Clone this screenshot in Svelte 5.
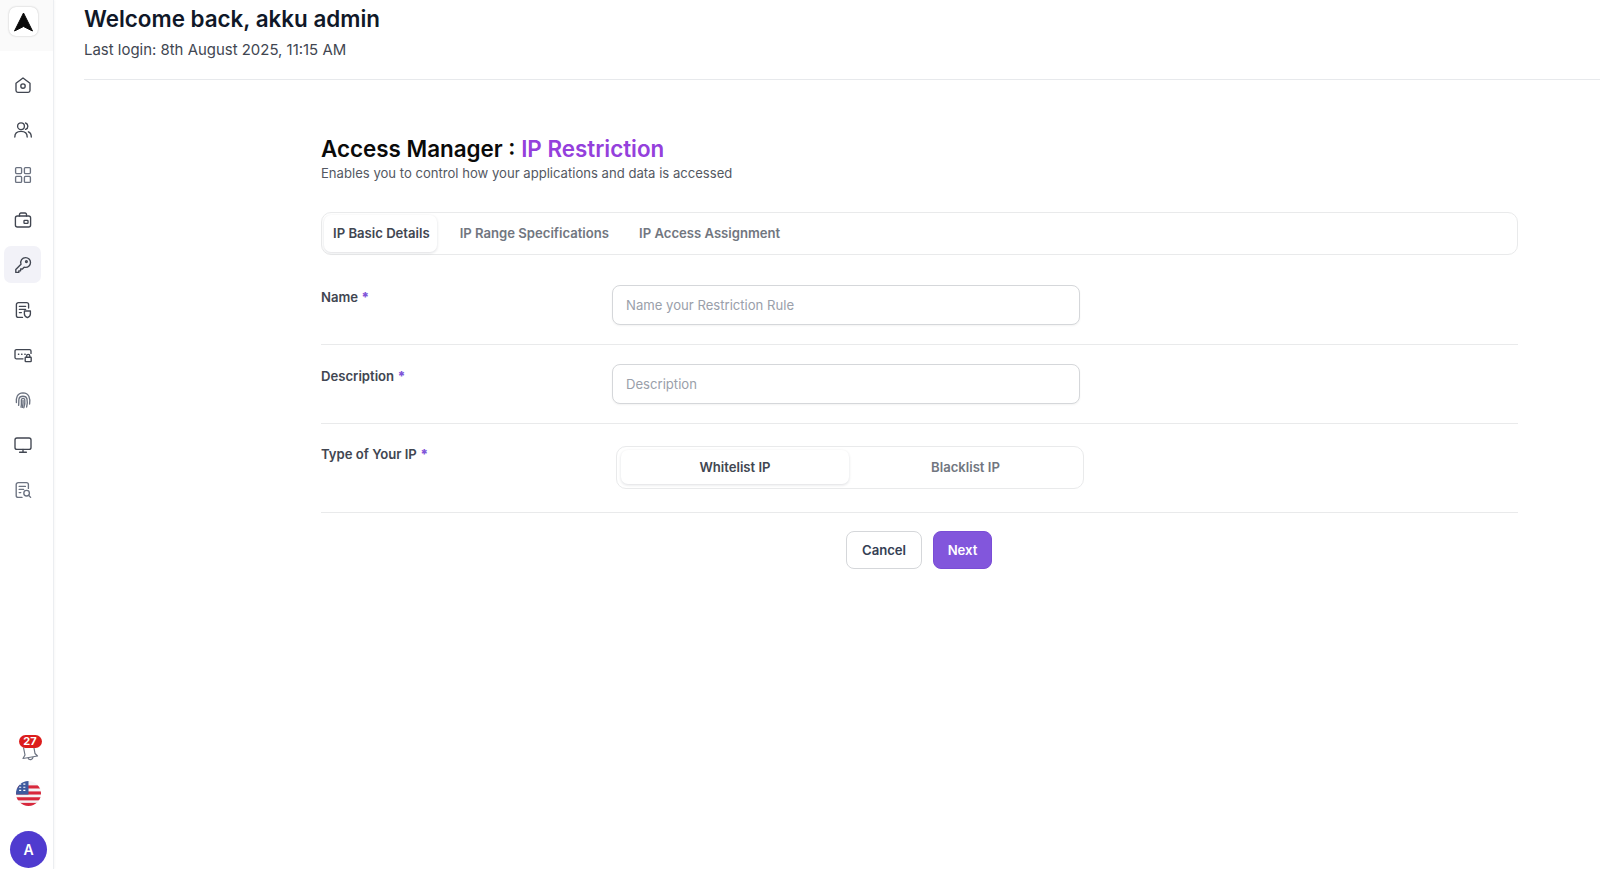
<script>
  const tabs = ['IP Basic Details', 'IP Range Specifications', 'IP Access Assignment'];
</script>

<div class="shell">
  <aside class="side">
    <div class="logo-wrap">
      <div class="logo">
        <svg width="22" height="22" viewBox="0 0 22 22"><path d="M10.5 2 L19.5 20 L10.5 15.5 L1.5 20 Z" fill="#0a0a0a" stroke="#0a0a0a" stroke-width="1" stroke-linejoin="round"/></svg>
      </div>
    </div>
    <nav class="nav">
      <div class="item">
        <svg viewBox="0 0 20 20"><path d="M3 8.2 L10 3 L17 8.2 V15.5 a1.8 1.8 0 0 1 -1.8 1.8 H4.8 A1.8 1.8 0 0 1 3 15.5 Z"/><circle cx="10" cy="11" r="2.2"/></svg>
      </div>
      <div class="item">
        <svg viewBox="0 0 20 20"><circle cx="8" cy="6.2" r="3.4"/><path d="M1.8 17 c0-3.6 2.6-5.6 6.2-5.6 s6.2 2 6.2 5.6"/><path d="M12.6 3 a3.4 3.4 0 0 1 0 6.4"/><path d="M15.4 11.8 c1.8.7 2.9 2.5 2.9 5.2"/></svg>
      </div>
      <div class="item">
        <svg class="light" viewBox="0 0 20 20"><rect x="2.6" y="2.6" width="6" height="6" rx="1"/><rect x="11.4" y="2.6" width="6" height="6" rx="1"/><rect x="2.6" y="11.4" width="6" height="6" rx="1"/><rect x="11.4" y="11.4" width="6" height="6" rx="1"/></svg>
      </div>
      <div class="item">
        <svg viewBox="0 0 20 20"><rect x="2.4" y="6" width="15.2" height="11" rx="2"/><path d="M6.5 6 V4.4 a1.4 1.4 0 0 1 1.4-1.4 h4.2 a1.4 1.4 0 0 1 1.4 1.4 V6"/><rect x="11" y="10.4" width="4" height="3" rx=".6"/></svg>
      </div>
      <div class="item active">
        <svg viewBox="0 0 20 20"><path d="M12.6 2.6 a4.9 4.9 0 0 1 0 9.8 a4.9 4.9 0 0 1 -1.5-.2 L9.4 14 H7.6 V15.8 H5.8 V17.4 H2.8 V14.5 L8 9.2 A4.9 4.9 0 0 1 12.6 2.6 Z"/><circle cx="13.4" cy="6.6" r=".9"/></svg>
      </div>
      <div class="item">
        <svg viewBox="0 0 20 20"><path d="M15.6 8 V4.6 a2 2 0 0 0 -2-2 H5.4 a2 2 0 0 0 -2 2 V15.4 a2 2 0 0 0 2 2 H9.5"/><path d="M6.4 6.4 H12.6 M6.4 9.4 H12.6 M6.4 12.6 H8.4"/><path d="M11.4 11 H17.4 V14 c0 1.8-1.4 3-3 3.6 c-1.6-.6-3-1.8-3-3.6 Z"/></svg>
      </div>
      <div class="item">
        <svg viewBox="0 0 20 20"><path d="M10 13.8 H3.4 A1.4 1.4 0 0 1 2 12.4 V6 A1.4 1.4 0 0 1 3.4 4.6 H16.6 A1.4 1.4 0 0 1 18 6 V8.4"/><path d="M5.4 9.2 h.4 M8.6 9.2 h.4 M11.8 9.2 h.4"/><rect x="12.2" y="12.2" width="6" height="4.4" rx=".6"/><path d="M13.6 12.2 V11 a1.6 1.6 0 0 1 3.2 0 V12.2"/></svg>
      </div>
      <div class="item">
        <svg class="light" viewBox="0 0 20 20"><path d="M3.4 12.5 C3 8 4 3 10 2.8 C16 3 17.4 8 16.6 14"/><path d="M5.6 15.4 C6 12 5.6 10.6 6 8.8 C6.6 5.4 13.2 5.2 14 9 C14.6 12 14.2 15 13.6 17"/><path d="M8 17.2 C8.8 14.4 8.2 11.6 8.4 9.8 C8.8 7.8 11.4 8 11.8 10 C12.2 12.6 11.6 15.4 10.8 17.8"/><path d="M10 10.4 C10.4 13 9.8 15.6 9.4 17.4"/></svg>
      </div>
      <div class="item">
        <svg viewBox="0 0 20 20"><rect x="2" y="3" width="16" height="11.4" rx="2"/><path d="M10 14.4 V17 M6.6 17.2 H13.4"/></svg>
      </div>
      <div class="item">
        <svg class="light" viewBox="0 0 20 20"><path d="M15.4 8.4 V4.6 a2 2 0 0 0 -2-2 H5.2 a2 2 0 0 0 -2 2 V15.4 a2 2 0 0 0 2 2 H9"/><path d="M6.2 6.4 H12.4 M6.2 9.4 H10.6 M6.2 12.6 H7.8"/><circle cx="13.6" cy="13.2" r="2.8"/><path d="M15.6 15.2 L17.6 17.4"/></svg>
      </div>
    </nav>
    <div class="bottom">
      <div class="bell">
        <svg viewBox="0 0 20 20"><path d="M3.5 1.5 L5 9 L3 12.5 L17.5 10 L15 7.5 L14 2"/><path d="M8 12 a2.6 2.6 0 0 0 5-1"/></svg>
        <span class="badge">27</span>
      </div>
      <svg class="flag" viewBox="0 0 24 24">
        <defs><clipPath id="flagclip"><circle cx="12" cy="12" r="12"/></clipPath></defs>
        <g clip-path="url(#flagclip)">
          <rect width="24" height="24" fill="#f4f4f6"/>
          <rect y="4.2" width="24" height="3" fill="#d8283c"/>
          <rect y="10" width="24" height="3" fill="#d8283c"/>
          <rect y="15.6" width="24" height="3" fill="#d8283c"/>
          <rect y="21" width="24" height="3" fill="#d8283c"/>
          <rect width="12" height="13" fill="#3d5a9e"/>
          <path d="M3 3h2M7 3h2M3 6h2M7 6h2M3 9h2M7 9h2" stroke="#fff" stroke-width="1.1"/>
        </g>
      </svg>
      <div class="avatar">A</div>
    </div>
  </aside>

  <main class="main">
    <header class="head">
      <h1>Welcome back, akku admin</h1>
      <p>Last login: 8th August 2025, 11:15 AM</p>
    </header>

    <section class="content">
      <h2>Access Manager : <span>IP Restriction</span></h2>
      <p class="sub">Enables you to control how your applications and data is accessed</p>

      <div class="tabs">
        {#each tabs as t, i}
          <div class="tab" class:on={i === 0}>{t}</div>
        {/each}
      </div>

      <div class="row first">
        <label class="lab" for="n">Name <b>*</b></label>
        <input id="n" placeholder="Name your Restriction Rule" />
      </div>
      <div class="row">
        <label class="lab" for="d">Description <b>*</b></label>
        <input id="d" placeholder="Description" />
      </div>
      <div class="row type">
        <div class="lab">Type of Your IP <b>*</b></div>
        <div class="seg">
          <div class="opt on">Whitelist IP</div>
          <div class="opt">Blacklist IP</div>
        </div>
      </div>

      <div class="actions">
        <button class="cancel">Cancel</button>
        <button class="next">Next</button>
      </div>
    </section>
  </main>
</div>

<style>
  :global(body) {
    margin: 0;
    background: #fff;
    font-family: Inter, "Liberation Sans", sans-serif;
    overflow: hidden;
  }
  .shell {
    display: flex;
    height: 869px;
    overflow: hidden;
  }
  .side {
    width: 53px;
    flex: none;
    border-right: 1px solid #eceef1;
    box-shadow: 1px 0 2px rgba(0, 0, 0, 0.03);
    display: flex;
    flex-direction: column;
  }
  .logo-wrap {
    height: 51px;
    background: #fafafa;
    padding: 7px 0 0 9px;
    box-sizing: border-box;
  }
  .logo {
    width: 29px;
    height: 29px;
    background: #fff;
    border-radius: 7px;
    box-shadow: 0 0 2px rgba(0, 0, 0, 0.25);
    display: flex;
    align-items: center;
    justify-content: center;
  }
  .nav {
    display: flex;
    flex-direction: column;
    gap: 8px;
    padding: 15px 0 0 4px;
  }
  .item {
    width: 37px;
    height: 37px;
    border-radius: 7px;
    display: flex;
    align-items: center;
    justify-content: center;
  }
  .item.active {
    background: #f2f2f8;
  }
  .item svg {
    width: 20px;
    height: 20px;
    fill: none;
    stroke: #414651;
    stroke-width: 1.35;
    stroke-linecap: round;
    stroke-linejoin: round;
  }
  .item svg.light {
    stroke: #6b7280;
  }
  .bottom {
    margin-top: auto;
    display: flex;
    flex-direction: column;
    align-items: center;
    margin-bottom: 1px;
    padding-left: 4px;
  }
  .bell {
    position: relative;
    width: 20px;
    height: 20px;
    margin-left: 2px;
  }
  .bell svg {
    width: 20px;
    height: 20px;
    fill: none;
    stroke: #6b7280;
    stroke-width: 1.2;
    stroke-linejoin: round;
    transform: translate(0, 5px);
  }
  .badge {
    position: absolute;
    left: -1px;
    top: -6px;
    width: 23px;
    height: 13px;
    background: #dc1c1c;
    border-radius: 7px;
    color: #fff;
    font-size: 11px;
    font-weight: 700;
    line-height: 13px;
    text-align: center;
  }
  .flag {
    width: 25px;
    height: 25px;
    margin-top: 20px;
    display: block;
  }
  .avatar {
    width: 37px;
    height: 37px;
    border-radius: 50%;
    background: #4f3bcf;
    color: #fff;
    font-size: 14px;
    font-weight: 600;
    display: flex;
    align-items: center;
    justify-content: center;
    margin-top: 25px;
  }
  .main {
    flex: 1;
    padding-left: 30px;
    min-width: 0;
  }
  .head {
    height: 79px;
    border-bottom: 1px solid #e7e9ec;
    box-sizing: content-box;
  }
  h1 {
    margin: 0;
    padding-top: 5px;
    font-size: 22.4px;
    line-height: 27px;
    font-weight: 600;
    color: #101828;
  }
  .head p {
    margin: 8px 0 0;
    font-size: 14.95px;
    line-height: 20px;
    color: #414651;
  }
  .content {
    margin-left: 237px;
    width: 1197px;
    padding-top: 54px;
  }
  h2 {
    margin: 0;
    font-size: 22.4px;
    line-height: 29px;
    font-weight: 600;
    color: #0a0a0a;
  }
  h2 span {
    color: #9440dc;
  }
  .sub {
    margin: 0;
    font-size: 13.1px;
    line-height: 20px;
    color: #535862;
  }
  .tabs {
    margin-top: 29px;
    height: 43px;
    box-sizing: border-box;
    border: 1px solid #e9eaeb;
    border-radius: 10px;
    padding: 2px;
    display: flex;
    gap: 14px;
  }
  .tab {
    padding: 0 7px 1px 9px;
    display: flex;
    align-items: center;
    font-size: 13.12px;
    font-weight: 600;
    color: #717680;
    border-radius: 7px;
  }
  .tab.on {
    color: #414651;
    background: #fff;
    box-shadow: 0 1px 3px rgba(16, 24, 40, 0.14);
  }
  .row {
    display: flex;
    padding: 19px 0 19px;
    border-bottom: 1px solid #e9eaeb;
    align-items: flex-start;
  }
  .row.first {
    padding-top: 30px;
  }
  .lab {
    width: 291px;
    flex: none;
    font-size: 13.12px;
    line-height: 20px;
    font-weight: 600;
    color: #414651;
    padding-top: 2px;
  }
  .lab b {
    color: #7f56d9;
  }
  input {
    width: 468px;
    height: 40px;
    box-sizing: border-box;
    border: 1px solid #d5d7da;
    border-radius: 8px;
    padding: 0 13px;
    font-family: inherit;
    font-size: 13.12px;
    outline: none;
    background: #fff;
    box-shadow: 0 1px 2px rgba(10, 13, 18, 0.05);
  }
  input::placeholder {
    color: #9aa0aa;
    opacity: 1;
  }
  .row.type {
    padding: 22px 0 23px;
  }
  .row.type .lab {
    padding-top: 0;
    margin-top: -2px;
  }
  .seg {
    margin-left: 4px;
    width: 468px;
    height: 43px;
    box-sizing: border-box;
    border: 1px solid #e9eaeb;
    border-radius: 10px;
    padding: 3px 4px 4px;
    display: flex;
  }
  .opt {
    flex: 1;
    padding-left: 3px;
    display: flex;
    align-items: center;
    justify-content: center;
    font-size: 13.12px;
    font-weight: 600;
    color: #717680;
    border-radius: 7px;
  }
  .opt.on {
    flex: 0 0 228px;
    box-sizing: border-box;
    padding-left: 0;
    color: #414651;
    box-shadow: 0 1px 3px rgba(16, 24, 40, 0.14);
  }
  .actions {
    display: flex;
    justify-content: center;
    gap: 11px;
    padding: 18px 1px 0 0;
  }
  button {
    height: 38px;
    border-radius: 8px;
    font-family: inherit;
    font-size: 13.12px;
    font-weight: 600;
  }
  .cancel {
    width: 76px;
    background: #fff;
    border: 1px solid #d5d7da;
    color: #344054;
  }
  .next {
    width: 59px;
    background: #8256dc;
    border: 1px solid #7a4dd6;
    color: #fff;
  }
</style>
